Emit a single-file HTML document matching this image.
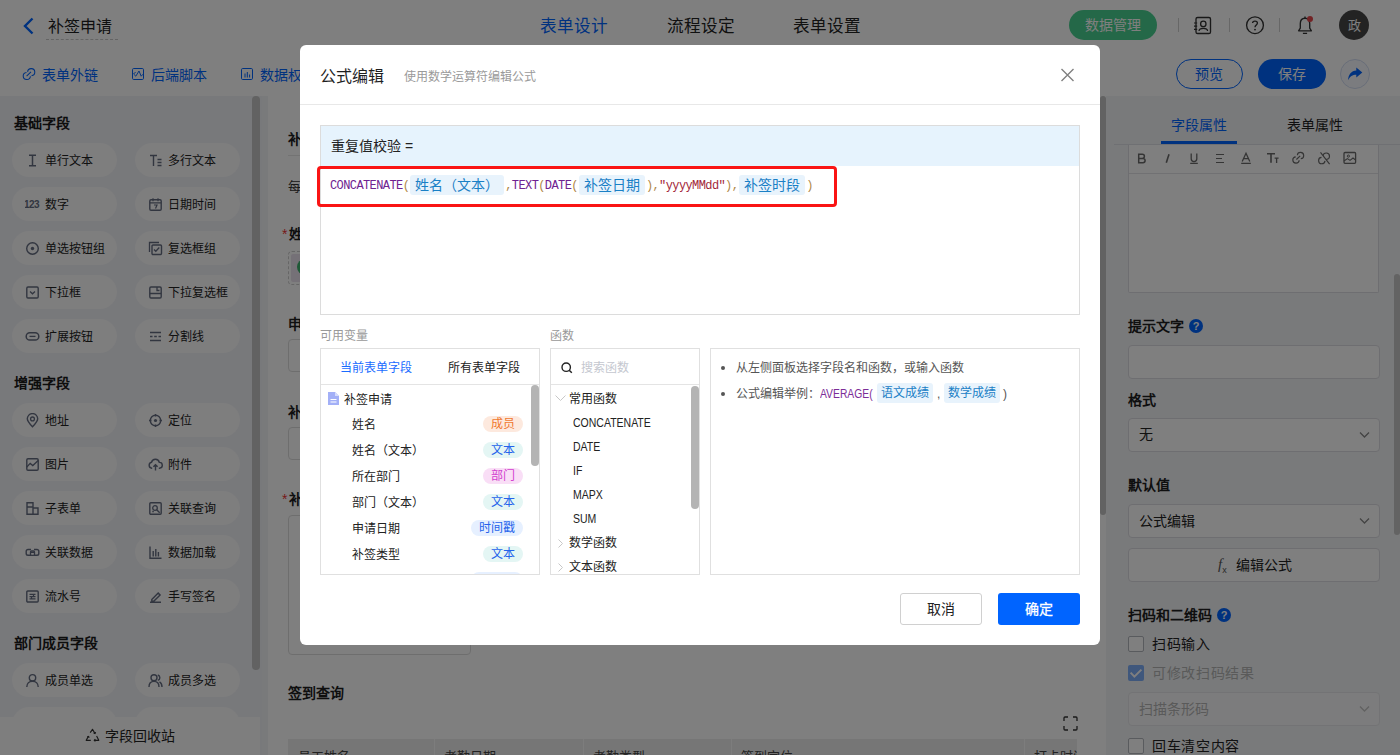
<!DOCTYPE html>
<html lang="zh-CN">
<head>
<meta charset="utf-8">
<style>
*{box-sizing:border-box;margin:0;padding:0}
html,body{width:1400px;height:755px;overflow:hidden}
body{position:relative;font-family:"Liberation Sans",sans-serif;background:#f3f4f7;color:#333}
.a{position:absolute;white-space:nowrap}
.t{line-height:1}
/* header */
#hdr{left:0;top:0;width:1400px;height:51px;background:#fff;border-bottom:1px solid #ebebeb}
#tb{left:0;top:50px;width:1400px;height:46px;background:#fff}
.tab{font-size:16.6px;top:19px;color:#222}
.tl{font-size:14px;color:#0064ff;top:68px}
/* sidebar */
#side{left:0;top:96px;width:262px;height:659px;background:#f1f2f6}
.sh{font-size:14px;font-weight:bold;color:#1a1a1a;left:14px}
.pill{width:105px;height:34px;border-radius:17px;background:#fcfcfd}
.pill span{position:absolute;left:33px;top:11px;font-size:12px;line-height:14px;color:#222}
.pill svg{position:absolute;left:13px;top:9.5px}
#canvas{left:268px;top:96px;width:838px;height:659px;background:#fff}
#rp{left:1106px;top:96px;width:294px;height:659px;background:#f3f4f7}
#overlay{left:0;top:0;width:1400px;height:755px;background:rgba(0,0,0,.5)}
/* modal */
#modal{left:300px;top:45px;width:800px;height:600px;background:#fff;border-radius:6px;overflow:hidden}
#fx .fn{color:#6f2290}
#fx .str{color:#a3283a}
#fx .tag{display:inline-block;vertical-align:top;position:relative;top:-1px;height:20px;line-height:20px;padding:0 5px;margin:0 1px;border-radius:3px;background:#e8f3fc;color:#1a80c6;font-family:"Liberation Sans",sans-serif;font-size:14px;letter-spacing:0}
.lbl{font-size:12px;color:#999}
.box{border:1px solid #e0e0e0;background:#fff}
.vrow{position:absolute;left:0;width:202px;height:16px}
.vrow span{position:absolute;left:31px;top:2px;font-size:12px;line-height:14px;color:#222;white-space:nowrap}
.vrow i{position:absolute;right:0;top:0;height:16px;border-radius:8px;font-style:normal;font-size:12px;line-height:16px;text-align:center}
.fnl{left:22px;font-size:12px;color:#222;transform:scaleX(0.875);transform-origin:0 0}
.extag{top:383px;height:20px;line-height:20px;text-align:center;border-radius:3px;background:#e8f3fc;color:#1a80c6;font-size:12px}
</style>
</head>
<body>
<!-- ============ BACKGROUND PAGE ============ -->
<div id="hdr" class="a"></div>
<svg class="a" style="left:22px;top:17px" width="14" height="18" viewBox="0 0 14 18"><path d="M10.5 1.5 L3 9 L10.5 16.5" fill="none" stroke="#0064ff" stroke-width="2.4"/></svg>
<div class="a t" style="left:48px;top:19px;font-size:16px;color:#1f1f1f">补签申请</div>
<div class="a" style="left:46px;top:39px;width:72px;border-top:1px dashed #c8c8c8"></div>
<div class="a t tab" style="left:540px;color:#0064ff">表单设计</div>
<div class="a t tab" style="left:667px">流程设定</div>
<div class="a t tab" style="left:793px">表单设置</div>
<div class="a" style="left:1069px;top:10px;width:88px;height:30px;border-radius:15px;background:#48d090"></div>
<div class="a t" style="left:1085px;top:18px;font-size:14px;color:#fff">数据管理</div>
<div class="a" style="left:1178px;top:18px;width:1px;height:14px;background:#cfcfcf"></div>
<div class="a" style="left:1229px;top:18px;width:1px;height:14px;background:#cfcfcf"></div>
<div class="a" style="left:1279px;top:18px;width:1px;height:14px;background:#cfcfcf"></div>
<svg class="a" style="left:1192px;top:15px" width="22" height="22" viewBox="0 0 22 22"><rect x="4" y="2.5" width="14.5" height="16" rx="1.6" fill="none" stroke="#333" stroke-width="1.35"/><circle cx="11.3" cy="8.9" r="2.7" fill="none" stroke="#333" stroke-width="1.3"/><path d="M7 16 C7.4 12.6 15.2 12.6 15.6 16" fill="none" stroke="#333" stroke-width="1.3"/><path d="M2 8h3.2M2 11.2h3.2M2 14.4h3.2" stroke="#333" stroke-width="1.2"/></svg>
<svg class="a" style="left:1244px;top:14px" width="22" height="22" viewBox="0 0 22 22"><circle cx="11" cy="11.2" r="8.4" fill="none" stroke="#333" stroke-width="1.35"/><path d="M8.6 9 C8.6 6.4 13.4 6.4 13.4 9 C13.4 10.9 11 11 11 13.2" fill="none" stroke="#333" stroke-width="1.35"/><circle cx="11" cy="15.6" r="0.9" fill="#333"/></svg>
<svg class="a" style="left:1295px;top:14px" width="22" height="22" viewBox="0 0 22 22"><path d="M10 4.2 C7 4.2 5.3 6.6 5.3 9.6 V14.2 L3.6 16.8 H16.4 L14.7 14.2 V9.6 C14.7 6.6 13 4.2 10 4.2 Z" fill="none" stroke="#333" stroke-width="1.35" stroke-linejoin="round"/><path d="M10 2.6v1.6M7.9 19.4h4.2" stroke="#333" stroke-width="1.35"/><circle cx="15" cy="5" r="3" fill="#e5464b"/></svg>
<div class="a" style="left:1339px;top:10px;width:30px;height:30px;border-radius:15px;background:#474747"></div>
<div class="a t" style="left:1348px;top:19px;font-size:13px;color:#fff">政</div>
<div id="tb" class="a"></div>
<svg class="a" style="left:22px;top:67px" width="14" height="14" viewBox="0 0 14 14"><path d="M5.61 4.89 A3.6 3.6 0 1 1 9.51 8.79 M8.39 9.31 A3.6 3.6 0 1 1 4.49 5.41 M4.6 9.2 L9 4.9" fill="none" stroke="#0064ff" stroke-width="1.05"/></svg>
<div class="a t tl" style="left:42px">表单外链</div>
<svg class="a" style="left:131px;top:67px" width="14" height="14" viewBox="0 0 14 14"><rect x="1.5" y="1.5" width="11" height="11" rx="1.2" fill="none" stroke="#0064ff" stroke-width="1"/><path d="M4.6 5 L2.6 7 L4.8 9.2 L8 4 L10.2 9.2 L12 7.2" fill="none" stroke="#0064ff" stroke-width="0.95"/></svg>
<div class="a t tl" style="left:151px">后端脚本</div>
<svg class="a" style="left:240px;top:67px" width="14" height="14" viewBox="0 0 14 14"><rect x="1.5" y="1.5" width="11" height="11" rx="1.2" fill="none" stroke="#0064ff" stroke-width="1"/><path d="M5 6.5v4M7.3 5v5.5M9.6 7.5v3" stroke="#0064ff" stroke-width="1"/></svg>
<div class="a t tl" style="left:260px">数据权限</div>
<div class="a" style="left:1176px;top:59px;width:67px;height:30px;border-radius:15px;border:1px solid #0064ff;background:#fff"></div>
<div class="a t" style="left:1195px;top:67px;font-size:14px;color:#0064ff">预览</div>
<div class="a" style="left:1258px;top:59px;width:68px;height:30px;border-radius:15px;background:#0064ff"></div>
<div class="a t" style="left:1278px;top:67px;font-size:14px;color:#fff">保存</div>
<div class="a" style="left:1340px;top:59px;width:30px;height:30px;border-radius:15px;border:1px solid #d2dcf2;background:#f7f9fe"></div>
<svg class="a" style="left:1346px;top:66px" width="18" height="16" viewBox="0 0 18 16"><path d="M10.3 1.6 L16.3 6.6 L10.3 11.6 V8.7 C6.5 8.7 4 10.3 2 14.2 C2.4 8.6 5.4 4.7 10.3 4.5 Z" fill="#0064ff"/></svg>
<div id="side" class="a"></div>
<div class="a t sh" style="top:116px">基础字段</div>
<div class="a pill" style="left:12px;top:143px"><svg width="15" height="15" viewBox="0 0 15 15"><path d="M4 2.3h7M4 12.7h7M7.5 2.3v10.4" stroke="#646c80" stroke-width="1.5" fill="none"/></svg><span>单行文本</span></div>
<div class="a pill" style="left:135px;top:143px"><svg width="15" height="15" viewBox="0 0 15 15"><path d="M2 2.5h7M5.5 2.5v10.5M9.5 6.5h4M9.5 9.5h4M9.5 12.5h4" stroke="#646c80" stroke-width="1.4" fill="none"/></svg><span>多行文本</span></div>
<div class="a pill" style="left:12px;top:187px"><svg width="15" height="15" viewBox="0 0 15 15"><text x="-1" y="10.6" font-size="10" font-weight="bold" font-family="Liberation Sans" letter-spacing="-0.6" fill="#646c80">123</text></svg><span>数字</span></div>
<div class="a pill" style="left:135px;top:187px"><svg width="15" height="15" viewBox="0 0 15 15"><rect x="1.8" y="2.8" width="11.4" height="10.4" rx="1.2" stroke="#646c80" stroke-width="1.4" fill="none"/><path d="M1.8 5.8h11.4M5 1.2v3M10 1.2v3M6 8h3l-1.5 3.5" stroke="#646c80" stroke-width="1.2" fill="none"/></svg><span>日期时间</span></div>
<div class="a pill" style="left:12px;top:231px"><svg width="15" height="15" viewBox="0 0 15 15"><circle cx="7.5" cy="7.5" r="5.8" stroke="#646c80" stroke-width="1.4" fill="none"/><circle cx="7.5" cy="7.5" r="1.7" fill="#646c80"/></svg><span>单选按钮组</span></div>
<div class="a pill" style="left:135px;top:231px"><svg width="15" height="15" viewBox="0 0 15 15"><path d="M1.5 11V1.5H11" stroke="#646c80" stroke-width="1.3" fill="none"/><rect x="4" y="4" width="9.5" height="9.5" rx="1" stroke="#646c80" stroke-width="1.4" fill="none"/><path d="M6 8.5l1.8 1.8 3.5-3.8" stroke="#646c80" stroke-width="1.3" fill="none"/></svg><span>复选框组</span></div>
<div class="a pill" style="left:12px;top:275px"><svg width="15" height="15" viewBox="0 0 15 15"><rect x="1.8" y="2" width="11.4" height="11" rx="1.2" stroke="#646c80" stroke-width="1.4" fill="none"/><path d="M5 6.5l2.5 2.3 2.5-2.3" stroke="#646c80" stroke-width="1.3" fill="none"/></svg><span>下拉框</span></div>
<div class="a pill" style="left:135px;top:275px"><svg width="15" height="15" viewBox="0 0 15 15"><rect x="1.8" y="2" width="11.4" height="11" rx="1.2" stroke="#646c80" stroke-width="1.4" fill="none"/><path d="M1.8 8.5h11.4M9 2v3.5h2.5" stroke="#646c80" stroke-width="1.3" fill="none"/></svg><span>下拉复选框</span></div>
<div class="a pill" style="left:12px;top:319px"><svg width="15" height="15" viewBox="0 0 15 15"><rect x="1.2" y="3.8" width="12.6" height="7.2" rx="3.6" stroke="#646c80" stroke-width="1.5" fill="none"/><path d="M4.5 7.4h6" stroke="#646c80" stroke-width="1.3"/></svg><span>扩展按钮</span></div>
<div class="a pill" style="left:135px;top:319px"><svg width="15" height="15" viewBox="0 0 15 15"><path d="M2 3.5h11M2 7.5h2.5M6.2 7.5h2.6M10.5 7.5h2.5M2 11.5h11" stroke="#646c80" stroke-width="1.4" fill="none"/></svg><span>分割线</span></div>
<div class="a t sh" style="top:376px">增强字段</div>
<div class="a pill" style="left:12px;top:403px"><svg width="15" height="15" viewBox="0 0 15 15"><path d="M7.5 13.8C4 10.2 2.3 8 2.3 5.8a5.2 5.2 0 0 1 10.4 0c0 2.2-1.7 4.4-5.2 8z" stroke="#646c80" stroke-width="1.4" fill="none"/><circle cx="7.5" cy="5.9" r="1.9" stroke="#646c80" stroke-width="1.3" fill="none"/></svg><span>地址</span></div>
<div class="a pill" style="left:135px;top:403px"><svg width="15" height="15" viewBox="0 0 15 15"><circle cx="7.5" cy="7.5" r="5.2" stroke="#646c80" stroke-width="1.4" fill="none"/><circle cx="7.5" cy="7.5" r="1.6" fill="#646c80"/><path d="M7.5 1v2.5M7.5 11.5V14M1 7.5h2.5M11.5 7.5H14" stroke="#646c80" stroke-width="1.4"/></svg><span>定位</span></div>
<div class="a pill" style="left:12px;top:447px"><svg width="15" height="15" viewBox="0 0 15 15"><rect x="1.8" y="1.8" width="11.4" height="11.4" rx="1.2" stroke="#646c80" stroke-width="1.4" fill="none"/><path d="M1.8 10l3.4-3.6 2.6 2.2 5.4-5" stroke="#646c80" stroke-width="1.3" fill="none"/></svg><span>图片</span></div>
<div class="a pill" style="left:135px;top:447px"><svg width="15" height="15" viewBox="0 0 15 15"><path d="M4.2 11.2H3.8A3 3 0 0 1 3.5 5.3 A4 4 0 0 1 11.3 5.4 A2.8 2.8 0 0 1 11.5 11.2H10.8M7.5 13.5V7.8M5.4 9.8l2.1-2.1 2.1 2.1" stroke="#646c80" stroke-width="1.4" fill="none"/></svg><span>附件</span></div>
<div class="a pill" style="left:12px;top:491px"><svg width="15" height="15" viewBox="0 0 15 15"><path d="M2 1.8h6v11.4H2zM8 7h5v6.2H8M2 6h6" stroke="#646c80" stroke-width="1.4" fill="none"/></svg><span>子表单</span></div>
<div class="a pill" style="left:135px;top:491px"><svg width="15" height="15" viewBox="0 0 15 15"><rect x="1.8" y="1.8" width="11.4" height="11.4" rx="1" stroke="#646c80" stroke-width="1.4" fill="none"/><circle cx="7" cy="7" r="2.3" stroke="#646c80" stroke-width="1.3" fill="none"/><path d="M8.7 8.7l3 3M4.3 10.5h1.5" stroke="#646c80" stroke-width="1.4"/></svg><span>关联查询</span></div>
<div class="a pill" style="left:12px;top:535px"><svg width="15" height="15" viewBox="0 0 15 15"><path d="M6 4.5H3a1.8 1.8 0 0 0-1.8 1.8v2.2A1.8 1.8 0 0 0 3 10.3h3M9 4.5h3a1.8 1.8 0 0 1 1.8 1.8v2.2a1.8 1.8 0 0 1-1.8 1.8H9M5.5 7.4h4" stroke="#646c80" stroke-width="1.4" fill="none"/><rect x="5.5" y="6" width="4" height="4.3" rx="1" stroke="#646c80" stroke-width="1.3" fill="none"/></svg><span>关联数据</span></div>
<div class="a pill" style="left:135px;top:535px"><svg width="15" height="15" viewBox="0 0 15 15"><path d="M2 1.5v11.8h11.5M5.2 6v5.5M7.8 4v7.5M10.4 7v4.5" stroke="#646c80" stroke-width="1.4" fill="none"/></svg><span>数据加载</span></div>
<div class="a pill" style="left:12px;top:579px"><svg width="15" height="15" viewBox="0 0 15 15"><rect x="1.8" y="2" width="11.4" height="11" rx="1" stroke="#646c80" stroke-width="1.4" fill="none"/><path d="M4.5 5.3h6M4.5 7.6h6M4.5 9.9h6M8.5 5.3v2.3M6.5 7.6v2.3" stroke="#646c80" stroke-width="1.2"/></svg><span>流水号</span></div>
<div class="a pill" style="left:135px;top:579px"><svg width="15" height="15" viewBox="0 0 15 15"><path d="M2 13.3h11M3.8 10.5L10.2 4l1.9 1.9-6.4 6.4H3.8z" stroke="#646c80" stroke-width="1.4" fill="none"/></svg><span>手写签名</span></div>
<div class="a t sh" style="top:636px">部门成员字段</div>
<div class="a pill" style="left:12px;top:663px"><svg width="15" height="15" viewBox="0 0 15 15"><circle cx="7.5" cy="4.8" r="3.2" stroke="#646c80" stroke-width="1.4" fill="none"/><path d="M1.8 14c0-3.6 2.5-5.8 5.7-5.8s5.7 2.2 5.7 5.8" stroke="#646c80" stroke-width="1.4" fill="none"/></svg><span>成员单选</span></div>
<div class="a pill" style="left:135px;top:663px"><svg width="15" height="15" viewBox="0 0 15 15"><circle cx="6" cy="4.8" r="3" stroke="#646c80" stroke-width="1.4" fill="none"/><path d="M1 14c0-3.6 2.2-5.6 5-5.6s5 2 5 5.6M9.8 2a2.8 2.8 0 0 1 0 5.4M11.5 8.8c1.6.9 2.5 2.6 2.5 5.2" stroke="#646c80" stroke-width="1.4" fill="none"/></svg><span>成员多选</span></div>
<div class="a pill" style="left:12px;top:707px"></div><div class="a pill" style="left:135px;top:707px"></div>
<div class="a" style="left:252px;top:96px;width:8px;height:574px;border-radius:4px;background:#c4c4c4"></div>
<div class="a" style="left:0;top:717px;width:260px;height:38px;background:#fdfdfd"></div>
<svg class="a" style="left:85px;top:728px" width="15" height="15" viewBox="0 0 15 15"><g fill="none" stroke="#333" stroke-width="1.15" stroke-linejoin="round"><path d="M5.2 4.6 L7.5 1.3 L10 5.6"/><path d="M8.6 4.9 L10 5.6 L10.6 4.1"/><path d="M11.6 8 L13.8 12.3 H9.2"/><path d="M10.4 11.1 L9.2 12.3 L10.4 13.4"/><path d="M5.8 12.3 H1.2 L3.4 8.4"/><path d="M2.3 9.1 L3.4 8.4 L4.3 9.7"/></g></svg>
<div class="a t" style="left:105px;top:729px;font-size:14px;color:#222">字段回收站</div>
<div id="canvas" class="a"></div>
<div class="a t" style="left:288px;top:132px;font-size:14px;font-weight:bold;color:#1f1f1f">补签申请</div>
<div class="a" style="left:288px;top:155px;width:790px;height:1px;background:#e6e6e6"></div>
<div class="a t" style="left:288px;top:180px;font-size:13px;color:#333">每月补签</div>
<div class="a t" style="left:282px;top:227px;font-size:14px;color:#e33">*</div>
<div class="a t" style="left:289px;top:227px;font-size:14px;font-weight:bold;color:#1f1f1f">姓名</div>
<div class="a" style="left:288px;top:251px;width:300px;height:34px;border:1px dashed #ccc;border-radius:4px;background:#fff"></div>
<div class="a" style="left:291px;top:254px;width:60px;height:28px;border-radius:2px;background:#ebe3ef"></div>
<div class="a" style="left:297px;top:259px;width:16px;height:16px;border-radius:8px;background:#3fb36e"></div>
<div class="a t" style="left:288px;top:317px;font-size:14px;font-weight:bold;color:#1f1f1f">申请日期</div>
<div class="a" style="left:288px;top:339px;width:300px;height:33px;border:1px solid #ddd;border-radius:4px;background:#fff"></div>
<div class="a t" style="left:288px;top:405px;font-size:14px;font-weight:bold;color:#1f1f1f">补签类型</div>
<div class="a" style="left:288px;top:427px;width:300px;height:33px;border:1px solid #ddd;border-radius:4px;background:#fff"></div>
<div class="a t" style="left:282px;top:492px;font-size:14px;color:#e33">*</div>
<div class="a t" style="left:289px;top:492px;font-size:14px;font-weight:bold;color:#1f1f1f">补签时段</div>
<div class="a" style="left:288px;top:515px;width:183px;height:140px;border:1px solid #ddd;border-radius:4px;background:#fff"></div>
<div class="a t" style="left:288px;top:686px;font-size:14px;font-weight:bold;color:#1f1f1f">签到查询</div>
<svg class="a" style="left:1063px;top:716px" width="15" height="15" viewBox="0 0 15 15"><path d="M1 5V2a1 1 0 0 1 1-1h3M10 1h3a1 1 0 0 1 1 1v3M14 10v3a1 1 0 0 1-1 1h-3M5 14H2a1 1 0 0 1-1-1v-3" fill="none" stroke="#333" stroke-width="1.3"/></svg>
<div class="a" style="left:288px;top:739px;width:789px;height:16px;background:#ededed;overflow:hidden">
<div class="a" style="left:146px;top:0;width:1px;height:16px;background:#fafafa"></div>
<div class="a" style="left:295px;top:0;width:1px;height:16px;background:#fafafa"></div>
<div class="a" style="left:443px;top:0;width:1px;height:16px;background:#fafafa"></div>
<div class="a" style="left:736px;top:0;width:1px;height:16px;background:#fafafa"></div>
<div class="a t" style="left:10px;top:11px;font-size:13px;color:#444">员工姓名</div>
<div class="a t" style="left:156px;top:11px;font-size:13px;color:#444">考勤日期</div>
<div class="a t" style="left:305px;top:11px;font-size:13px;color:#444">考勤类型</div>
<div class="a t" style="left:453px;top:11px;font-size:13px;color:#444">签到定位</div>
<div class="a t" style="left:746px;top:11px;font-size:13px;color:#444">打卡时间</div>
</div>
<div class="a" style="left:1100px;top:96px;width:6px;height:419px;border-radius:3px;background:#c4c4c4"></div>
<div id="rp" class="a"></div>
<div class="a t" style="left:1171px;top:118px;font-size:14px;color:#0064ff">字段属性</div>
<div class="a t" style="left:1287px;top:118px;font-size:14px;color:#1f1f1f">表单属性</div>
<div class="a" style="left:1114px;top:144px;width:286px;height:1px;background:#dfe1e6"></div>
<div class="a" style="left:1161px;top:141px;width:76px;height:3px;background:#0064ff"></div>
<div class="a" style="left:1128px;top:145px;width:251px;height:148px;background:#fff;border:1px solid #dcdde2;border-top:none;border-radius:0 0 2px 2px"></div>
<div class="a" style="left:1129px;top:173px;width:249px;height:1px;background:#e2e3e7"></div>
<svg class="a" style="left:1134px;top:148px" width="230" height="20" viewBox="0 0 230 20">
<g fill="none" stroke="#6a6a6a" stroke-width="1.3">
<path d="M4.7 6.2h3.6a2.1 2.1 0 0 1 0 4.2H4.7z M4.7 10.4h4.2a2.2 2.2 0 0 1 0 4.4H4.7z" stroke-width="1.5"/>
<path d="M35 6.2 L32.3 14.8" stroke-width="1.6"/>
<path d="M57.2 5.5v5.3a2.8 2.8 0 0 0 5.6 0V5.5 M56.2 15.3h7.6"/>
<path d="M82 6.5h8M82 10.5h6M82 14.5h8" stroke-width="1.2"/>
<path d="M108.2 13.4 L112 5.2 L115.8 13.4 M109.6 10.6h4.8 M107.2 15.3h9.6"/>
<path d="M133 5.8h8M137 5.8v9" stroke-width="1.6"/><path d="M140.6 10.2h4M142.6 10.2v4.8" stroke-width="1.3"/>
<path d="M163.31 7.22 A3.2 3.2 0 1 1 166.78 10.69 M165.19 12.28 A3.2 3.2 0 1 1 161.72 8.81 M162.4 11.5 L166.2 7.8" stroke-width="1.15"/>
<path d="M189.11 7.92 A3.2 3.2 0 1 1 192.58 11.39 M190.99 12.88 A3.2 3.2 0 1 1 187.52 9.41 M186.5 4.4 L195.6 16.2" stroke-width="1.15"/>
<rect x="210" y="4.5" width="11.6" height="10.8" rx="1"/><circle cx="214.4" cy="8.1" r="1.1" stroke-width="1"/><path d="M210 13 L213.4 10.6 L216 12.4 L219 10 L221.6 12" stroke-width="1.1"/>
</g></svg>
<div class="a t" style="left:1128px;top:319px;font-size:14px;font-weight:bold;color:#1f1f1f">提示文字</div>
<div class="a" style="left:1189px;top:319px;width:14px;height:14px;border-radius:7px;background:#0064ff;color:#fff;font-size:11px;font-weight:bold;line-height:14px;text-align:center">?</div>
<div class="a" style="left:1128px;top:345px;width:252px;height:34px;background:#fff;border:1px solid #dcdde2;border-radius:4px"></div>
<div class="a t" style="left:1128px;top:393px;font-size:14px;font-weight:bold;color:#1f1f1f">格式</div>
<div class="a" style="left:1128px;top:418px;width:252px;height:34px;background:#fff;border:1px solid #dcdde2;border-radius:4px"></div>
<div class="a t" style="left:1139px;top:427px;font-size:14px;color:#222">无</div>
<svg class="a" style="left:1359px;top:431px" width="11" height="8" viewBox="0 0 11 8"><path d="M1 1.5l4.5 4.5 4.5-4.5" fill="none" stroke="#888" stroke-width="1.3"/></svg>
<div class="a t" style="left:1128px;top:478px;font-size:14px;font-weight:bold;color:#1f1f1f">默认值</div>
<div class="a" style="left:1128px;top:504px;width:252px;height:34px;background:#fff;border:1px solid #dcdde2;border-radius:4px"></div>
<div class="a t" style="left:1139px;top:514px;font-size:14px;color:#222">公式编辑</div>
<svg class="a" style="left:1359px;top:517px" width="11" height="8" viewBox="0 0 11 8"><path d="M1 1.5l4.5 4.5 4.5-4.5" fill="none" stroke="#888" stroke-width="1.3"/></svg>
<div class="a" style="left:1128px;top:548px;width:252px;height:34px;background:#fff;border:1px solid #dcdde2;border-radius:4px"></div>
<div class="a t" style="left:1218px;top:557px;font-size:15px;font-style:italic;font-family:'Liberation Serif',serif;color:#555">f<sub style="font-size:9px;font-style:normal;font-family:'Liberation Sans'">x</sub></div>
<div class="a t" style="left:1236px;top:558px;font-size:14px;color:#222">编辑公式</div>
<div class="a t" style="left:1128px;top:608px;font-size:14px;font-weight:bold;color:#1f1f1f">扫码和二维码</div>
<div class="a" style="left:1217px;top:608px;width:14px;height:14px;border-radius:7px;background:#0064ff;color:#fff;font-size:11px;font-weight:bold;line-height:14px;text-align:center">?</div>
<div class="a" style="left:1128px;top:636px;width:16px;height:16px;background:#fff;border:1px solid #b3b6bd;border-radius:2px"></div>
<div class="a t" style="left:1152px;top:637px;font-size:14px;color:#222;letter-spacing:0.7px">扫码输入</div>
<div class="a" style="left:1128px;top:665px;width:16px;height:16px;background:#7eaef9;border-radius:2px"></div>
<svg class="a" style="left:1128px;top:665px" width="16" height="16" viewBox="0 0 16 16"><path d="M2.6 7.6L6.4 11.6 13.4 4.6" fill="none" stroke="#fff" stroke-width="2"/></svg>
<div class="a t" style="left:1152px;top:666px;font-size:14px;color:#b4b4b4;letter-spacing:0.7px">可修改扫码结果</div>
<div class="a" style="left:1128px;top:692px;width:252px;height:34px;background:#f9f9fa;border:1px solid #e6e7ea;border-radius:4px"></div>
<div class="a t" style="left:1139px;top:702px;font-size:14px;color:#b4b4b4">扫描条形码</div>
<svg class="a" style="left:1359px;top:705px" width="11" height="8" viewBox="0 0 11 8"><path d="M1 1.5l4.5 4.5 4.5-4.5" fill="none" stroke="#c2c2c2" stroke-width="1.3"/></svg>
<div class="a" style="left:1128px;top:738px;width:16px;height:16px;background:#fff;border:1px solid #b3b6bd;border-radius:2px"></div>
<div class="a t" style="left:1152px;top:739px;font-size:14px;color:#222;letter-spacing:0.7px">回车清空内容</div>
<div class="a" style="left:1394px;top:274px;width:6px;height:261px;border-radius:3px;background:#c6c6c6"></div>

<!-- ============ OVERLAY ============ -->
<div id="overlay" class="a"></div>

<!-- ============ MODAL ============ -->
<div id="modal" class="a"></div>
<div class="a t" style="left:320px;top:69px;font-size:16px;color:#1f1f1f">公式编辑</div>
<div class="a t" style="left:404px;top:71px;font-size:12px;color:#9a9a9a">使用数学运算符编辑公式</div>
<svg class="a" style="left:1060px;top:68px" width="15" height="14" viewBox="0 0 15 14"><path d="M1.5 1L13.5 13M13.5 1L1.5 13" stroke="#808080" stroke-width="1.4"/></svg>
<div class="a" style="left:300px;top:104px;width:800px;height:1px;background:#e8e8e8"></div>
<div class="a" style="left:320px;top:125px;width:760px;height:190px;border:1px solid #dcdcdc;background:#fff"></div>
<div class="a" style="left:321px;top:126px;width:758px;height:40px;background:#e6f3fd"></div>
<div class="a t" style="left:331px;top:139px;font-size:14px;color:#222">重复值校验 =</div>
<div id="fx" class="a" style="left:330px;top:176px;height:20px;line-height:20px;font-family:'Liberation Mono',monospace;font-size:12px;letter-spacing:-0.6px;color:#b08848">
<span class="fn">CONCATENATE</span>(<span class="tag">姓名（文本）</span>,<span class="fn">TEXT</span>(<span class="fn">DATE</span>(<span class="tag">补签日期</span>),<span class="str">"yyyyMMdd"</span>),<span class="tag">补签时段</span>)</div>
<div class="a" style="left:317px;top:166px;width:520px;height:41px;border:3px solid #fa1414;border-radius:4px"></div>
<div class="a t lbl" style="left:320px;top:330px">可用变量</div>
<div class="a t lbl" style="left:550px;top:330px">函数</div>
<!-- variables panel -->
<div class="a box" style="left:320px;top:348px;width:220px;height:227px"></div>
<div class="a" style="left:321px;top:384px;width:218px;height:1px;background:#e4e4e4"></div>
<div class="a t" style="left:340px;top:362px;font-size:12px;color:#1a6cff">当前表单字段</div>
<div class="a t" style="left:448px;top:362px;font-size:12px;color:#222">所有表单字段</div>
<svg class="a" style="left:328px;top:392px" width="11" height="13" viewBox="0 0 11 13"><path d="M0 0h7l4 4v9H0z" fill="#a3b0f7"/><path d="M7 0v4h4" fill="#d6dcfb"/><path d="M2.5 7.5h6M2.5 10h6" stroke="#fff" stroke-width="1.1"/></svg>
<div class="a t" style="left:344px;top:394px;font-size:12px;color:#222">补签申请</div>
<div class="a" style="left:321px;top:385px;width:218px;height:189px;overflow:hidden">
<div class="vrow" style="top:31px"><span>姓名</span><i style="background:#fde9de;color:#f0782f;width:40px">成员</i></div>
<div class="vrow" style="top:57px"><span>姓名（文本）</span><i style="background:#e4f6f4;color:#2563eb;width:40px">文本</i></div>
<div class="vrow" style="top:83px"><span>所在部门</span><i style="background:#f9def6;color:#d23ecf;width:40px">部门</i></div>
<div class="vrow" style="top:109px"><span>部门（文本）</span><i style="background:#e4f6f4;color:#2563eb;width:40px">文本</i></div>
<div class="vrow" style="top:135px"><span>申请日期</span><i style="background:#e6f0ff;color:#2563eb;width:52px">时间戳</i></div>
<div class="vrow" style="top:161px"><span>补签类型</span><i style="background:#e4f6f4;color:#2563eb;width:40px">文本</i></div>
<div class="vrow" style="top:187px"><i style="background:#e6f0ff;color:#2563eb;width:52px"></i></div>
</div>
<div class="a" style="left:531px;top:385px;width:8px;height:81px;border-radius:4px;background:#b4b4b4"></div>
<!-- functions panel -->
<div class="a box" style="left:550px;top:348px;width:150px;height:227px"></div>
<div class="a" style="left:551px;top:384px;width:148px;height:1px;background:#e4e4e4"></div>
<svg class="a" style="left:561px;top:362px" width="12" height="12" viewBox="0 0 12 12"><circle cx="5.2" cy="5.2" r="4.2" fill="none" stroke="#222" stroke-width="1.4"/><path d="M8.2 8.2l2.6 2.6" stroke="#222" stroke-width="1.5"/></svg>
<div class="a t" style="left:581px;top:362px;font-size:12px;color:#c4c7cf">搜索函数</div>
<div class="a" style="left:551px;top:385px;width:148px;height:189px;overflow:hidden">
<svg class="a" style="left:4px;top:10px" width="11" height="7" viewBox="0 0 11 7"><path d="M0.5 0.5l5 5 5-5" fill="none" stroke="#c8c8c8" stroke-width="1"/></svg>
<div class="a t" style="left:18px;top:8px;font-size:12px;color:#222">常用函数</div>
<div class="a t fnl" style="top:32px">CONCATENATE</div>
<div class="a t fnl" style="top:56px">DATE</div>
<div class="a t fnl" style="top:80px">IF</div>
<div class="a t fnl" style="top:104px">MAPX</div>
<div class="a t fnl" style="top:128px">SUM</div>
<svg class="a" style="left:7px;top:154px" width="5" height="9" viewBox="0 0 5 9"><path d="M0.5 0.5l4 4-4 4" fill="none" stroke="#c8c8c8" stroke-width="1"/></svg>
<div class="a t" style="left:18px;top:152px;font-size:12px;color:#222">数学函数</div>
<svg class="a" style="left:7px;top:178px" width="5" height="9" viewBox="0 0 5 9"><path d="M0.5 0.5l4 4-4 4" fill="none" stroke="#c8c8c8" stroke-width="1"/></svg>
<div class="a t" style="left:18px;top:176px;font-size:12px;color:#222">文本函数</div>
</div>
<div class="a" style="left:691px;top:386px;width:8px;height:123px;border-radius:4px;background:#b4b4b4"></div>
<!-- description panel -->
<div class="a box" style="left:710px;top:348px;width:370px;height:227px"></div>
<div class="a" style="left:721px;top:366px;width:4px;height:4px;border-radius:2px;background:#555"></div>
<div class="a t" style="left:736px;top:362px;font-size:12px;color:#555">从左侧面板选择字段名和函数，或输入函数</div>
<div class="a" style="left:721px;top:392px;width:4px;height:4px;border-radius:2px;background:#555"></div>
<div class="a t" style="left:736px;top:388px;font-size:12px;color:#555">公式编辑举例：</div>
<div class="a t" style="left:820px;top:388px;font-size:12px;color:#7c2d98;transform:scaleX(0.86);transform-origin:0 0">AVERAGE(</div>
<div class="a extag" style="left:877px;width:56px">语文成绩</div>
<div class="a t" style="left:937px;top:388px;font-size:12px;color:#555">,</div>
<div class="a extag" style="left:944px;width:56px">数学成绩</div>
<div class="a t" style="left:1003px;top:388px;font-size:12px;color:#555">)</div>
<!-- buttons -->
<div class="a" style="left:900px;top:593px;width:82px;height:32px;border:1px solid #d0d0d0;border-radius:3px;background:#fff"></div>
<div class="a t" style="left:927px;top:602px;font-size:14px;color:#222">取消</div>
<div class="a" style="left:998px;top:593px;width:82px;height:32px;border-radius:3px;background:#0064ff"></div>
<div class="a t" style="left:1025px;top:602px;font-size:14px;color:#fff;-webkit-text-stroke:0.3px #fff">确定</div>
</body>
</html>
